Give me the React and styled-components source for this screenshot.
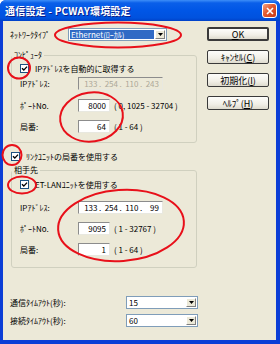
import React from "react";
import styled, { createGlobalStyle } from "styled-components";

const GlobalStyle = createGlobalStyle`
  html, body {
    margin: 0;
    padding: 0;
    background: #fff;
  }
  body {
    font-family: "Noto Sans CJK JP", "Liberation Sans", sans-serif;
    font-size: 8px;
    color: #000;
  }
`;

const Window = styled.div`
  position: relative;
  width: 280px;
  height: 344px;
  box-sizing: border-box;
  display: flex;
  flex-direction: column;
  background: #0b3ed6;
  border-radius: 6px 6px 0 0;
  overflow: hidden;
`;

const TitleBar = styled.div`
  height: 21px;
  flex-shrink: 0;
  display: flex;
  align-items: center;
  justify-content: space-between;
  padding: 0 3px 0 5px;
  background: linear-gradient(#3d8ef8 0%, #0a5fe9 14%, #0056e6 50%, #0052de 85%, #0041c8 100%);
`;

const Title = styled.span`
  color: #fff;
  font-weight: bold;
  font-size: 10px;
  letter-spacing: 0.2px;
  text-shadow: 1px 1px 0 #0a1e8a;
`;

const CloseButton = styled.div`
  width: 15px;
  height: 15px;
  box-sizing: border-box;
  border: 1px solid #fff;
  border-radius: 3px;
  background: linear-gradient(135deg, #f2a383, #e2592f 45%, #c53a18);
  display: flex;
  align-items: center;
  justify-content: center;
`;

const Client = styled.div`
  flex: 1;
  margin: 0 4px 4px 3px;
  padding: 7px 7px 0 7px;
  background: #ece9d8;
  display: flex;
  gap: 10px;
`;

const Main = styled.div`
  width: 187px;
  display: flex;
  flex-direction: column;
`;

const Row = styled.div`
  display: flex;
  align-items: center;
  height: ${(p) => p.$h || 13}px;
  margin-top: ${(p) => p.$mt || 0}px;
  margin-left: ${(p) => p.$ml || 0}px;
  white-space: nowrap;
`;

const Label = styled.span`
  width: ${(p) => p.$w}px;
  flex-shrink: 0;
  white-space: nowrap;
`;

const Group = styled.fieldset`
  margin: ${(p) => p.$mt}px 0 0 1px;
  padding: 0;
  border: 1px solid #d0d0bf;
  border-radius: 3px;
  min-width: 0;
`;

const Legend = styled.legend`
  padding: 0 2px;
  line-height: 10px;
  font-size: 8px;
`;

const GroupBody = styled.div`
  display: flex;
  flex-direction: column;
  padding: ${(p) => p.$pt}px 0 ${(p) => p.$pb}px 8px;
`;

const CheckBox = styled.span`
  width: 9px;
  height: 9px;
  box-sizing: border-box;
  border: 1px solid #1c5180;
  background: #fff;
  display: flex;
  align-items: center;
  justify-content: center;
  margin-right: 6px;
  flex-shrink: 0;
`;

const TextBox = styled.div`
  width: ${(p) => p.$w}px;
  height: 13px;
  box-sizing: border-box;
  border: 1px solid;
  border-color: #8c8c8c #e8e8e0 #e8e8e0 #8c8c8c;
  background: ${(p) => (p.$disabled ? "#ece9d8" : "#fff")};
  color: ${(p) => (p.$disabled ? "#aca899" : "#000")};
  display: flex;
  align-items: center;
  justify-content: flex-end;
  padding: 0 3px;
  flex-shrink: 0;
`;

const IpPart = styled.span`
  flex: 1;
  text-align: right;
`;

const IpDot = styled.span`
  width: 5px;
  text-align: center;
`;

const Range = styled.span`
  margin-left: 4px;
`;

const Combo = styled.div`
  width: ${(p) => p.$w}px;
  height: 13px;
  box-sizing: border-box;
  border: 1px solid #7f9db9;
  background: #fff;
  display: flex;
  align-items: stretch;
  padding: 1px;
  flex-shrink: 0;
`;

const ComboText = styled.span`
  flex: 1;
  display: flex;
  align-items: center;
  padding-left: 1px;
  margin-right: 1px;
  background: ${(p) => (p.$selected ? "#316ac5" : "transparent")};
  color: ${(p) => (p.$selected ? "#fff" : "#000")};
`;

const DropButton = styled.span`
  width: 10px;
  box-sizing: border-box;
  border: 1px solid;
  border-color: #fff #808080 #808080 #fff;
  background: #ece9d8;
  display: flex;
  align-items: center;
  justify-content: center;
`;

const Buttons = styled.div`
  width: 62px;
  margin-top: -1px;
  display: flex;
  flex-direction: column;
  gap: 9px;
`;

const Button = styled.div`
  height: 14px;
  box-sizing: border-box;
  border: ${(p) => (p.$default ? 2 : 1)}px solid #3a3a3a;
  border-radius: 2px;
  background: linear-gradient(#fdfdfb, #f1efe7 60%, #dedbce);
  display: flex;
  align-items: center;
  justify-content: center;
  font-size: 9px;
`;

const Key = styled.span`
  text-decoration: underline;
`;

const Overlay = styled.svg`
  position: absolute;
  left: 0;
  top: 0;
  pointer-events: none;
`;

const Check = () => (
  <CheckBox>
    <svg width="7" height="7" viewBox="0 0 7 7">
      <path d="M1 3.3 L2.8 5.1 L6 1.6" fill="none" stroke="#000" strokeWidth="1.4" />
    </svg>
  </CheckBox>
);

const Arrow = () => (
  <svg width="5" height="3" viewBox="0 0 5 3">
    <path d="M0 0 H5 L2.5 3 Z" fill="#000" />
  </svg>
);

const IpBox = ({ parts, disabled }) => (
  <TextBox $w={85} $disabled={disabled}>
    {parts.map((p, i) => (
      <React.Fragment key={i}>
        {i > 0 && <IpDot>.</IpDot>}
        <IpPart>{p}</IpPart>
      </React.Fragment>
    ))}
  </TextBox>
);

const App = () => (
  <>
    <GlobalStyle />
    <Window>
      <TitleBar>
        <Title>通信設定 - PCWAY環境設定</Title>
        <CloseButton>
          <svg width="8" height="8" viewBox="0 0 8 8">
            <path d="M1 1 L7 7 M7 1 L1 7" stroke="#fff" strokeWidth="1.6" />
          </svg>
        </CloseButton>
      </TitleBar>
      <Client>
        <Main>
          <Row>
            <Label $w={58}>ﾈｯﾄﾜｰｸﾀｲﾌﾟ</Label>
            <Combo $w={99}>
              <ComboText $selected>Ethernet(ﾛｰｶﾙ)</ComboText>
              <DropButton>
                <Arrow />
              </DropButton>
            </Combo>
          </Row>

          <Group $mt={9}>
            <Legend>ｺﾝﾋﾟｭｰﾀ</Legend>
            <GroupBody $pt={3} $pb={9}>
              <Row $h={10}>
                <Check />
                IPｱﾄﾞﾚｽを自動的に取得する
              </Row>
              <Row $mt={4}>
                <Label $w={58}>IPｱﾄﾞﾚｽ:</Label>
                <IpBox parts={["133", "254", "110", "243"]} disabled />
              </Row>
              <Row $mt={9}>
                <Label $w={58}>ﾎﾟｰﾄNo.</Label>
                <TextBox $w={32}>8000</TextBox>
                <Range>( 0, 1025 - 32704 )</Range>
              </Row>
              <Row $mt={8}>
                <Label $w={58}>局番:</Label>
                <TextBox $w={32}>64</TextBox>
                <Range>( 1 - 64 )</Range>
              </Row>
            </GroupBody>
          </Group>

          <Row $h={10} $mt={8} $ml={1}>
            <Check />
            ﾘﾝｸﾕﾆｯﾄの局番を使用する
          </Row>

          <Group $mt={4}>
            <Legend>相手先</Legend>
            <GroupBody $pt={4} $pb={11}>
              <Row $h={10}>
                <Check />
                ET-LANﾕﾆｯﾄを使用する
              </Row>
              <Row $mt={12}>
                <Label $w={58}>IPｱﾄﾞﾚｽ:</Label>
                <IpBox parts={["133", "254", "110", "99"]} />
              </Row>
              <Row $mt={8}>
                <Label $w={58}>ﾎﾟｰﾄNo.</Label>
                <TextBox $w={32}>9095</TextBox>
                <Range>( 1 - 32767 )</Range>
              </Row>
              <Row $mt={8}>
                <Label $w={58}>局番:</Label>
                <TextBox $w={32}>1</TextBox>
                <Range>( 1 - 64 )</Range>
              </Row>
            </GroupBody>
          </Group>

          <Row $mt={28}>
            <Label $w={116}>通信ﾀｲﾑｱｳﾄ(秒):</Label>
            <Combo $w={72}>
              <ComboText>15</ComboText>
              <DropButton>
                <Arrow />
              </DropButton>
            </Combo>
          </Row>
          <Row $mt={5}>
            <Label $w={116}>接続ﾀｲﾑｱｳﾄ(秒):</Label>
            <Combo $w={72}>
              <ComboText>60</ComboText>
              <DropButton>
                <Arrow />
              </DropButton>
            </Combo>
          </Row>
        </Main>

        <Buttons>
          <Button $default>
            <Key>O</Key>K
          </Button>
          <Button>
            ｷｬﾝｾﾙ(<Key>C</Key>)
          </Button>
          <Button>
            初期化(<Key>I</Key>)
          </Button>
          <Button>
            ﾍﾙﾌﾟ(<Key>H</Key>)
          </Button>
        </Buttons>
      </Client>

      <Overlay width="280" height="344" viewBox="0 0 280 344">
        <g fill="none" stroke="#e8101a" strokeWidth="2">
          <ellipse cx="118" cy="35" rx="63" ry="12.5" />
          <ellipse cx="19" cy="68" rx="11" ry="10.5" />
          <ellipse cx="91.5" cy="117" rx="31.5" ry="24.5" transform="rotate(-8 91.5 117)" />
          <ellipse cx="12" cy="155" rx="9.5" ry="10" />
          <ellipse cx="22" cy="185" rx="14" ry="8.5" />
          <ellipse cx="121" cy="225.5" rx="63" ry="35.5" transform="rotate(-4 121 225.5)" />
        </g>
      </Overlay>
    </Window>
  </>
);

export default App;
